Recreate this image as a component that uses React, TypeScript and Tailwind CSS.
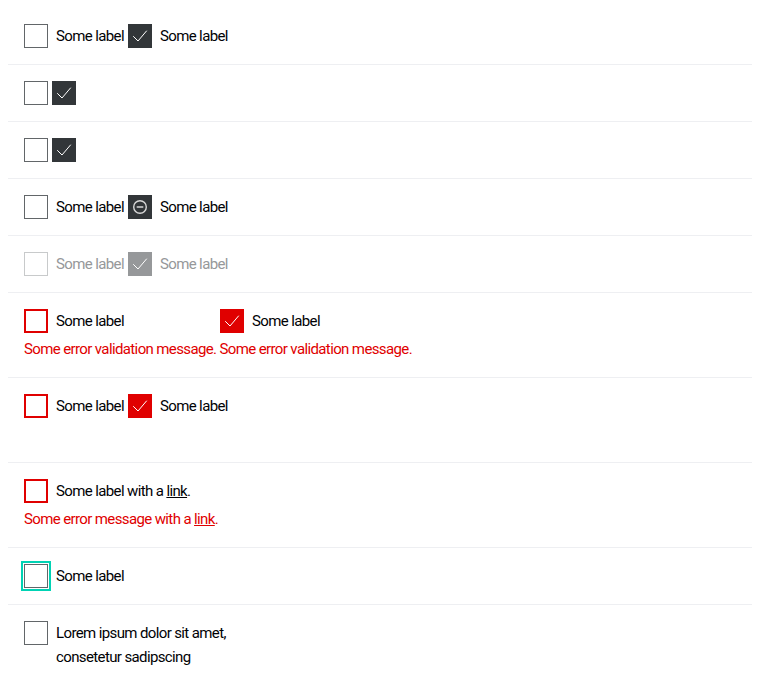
import React from "react";

type State = "default" | "error" | "disabled";

function CheckIcon() {
  return (
    <svg width="24" height="24" viewBox="0 0 24 24" fill="none">
      <path d="M5.5 12.5l4.5 4.5 8.5-10" stroke="#fff" strokeWidth="1" strokeLinecap="round" strokeLinejoin="round" />
    </svg>
  );
}

function IndetIcon() {
  return (
    <svg width="24" height="24" viewBox="0 0 24 24" fill="none">
      <circle cx="12" cy="12" r="6.3" stroke="#d8d8d8" strokeWidth="1.4" />
      <path d="M9.2 12h5.6" stroke="#d8d8d8" strokeWidth="1.4" strokeLinecap="round" />
    </svg>
  );
}

function Box({ checked = false, indeterminate = false, state = "default", focus = false }: { checked?: boolean; indeterminate?: boolean; state?: State; focus?: boolean }) {
  let cls = "";
  if (checked || indeterminate) {
    if (state === "error") cls = "bg-[#e00000]";
    else if (state === "disabled") cls = "bg-[#96989a]";
    else cls = "bg-[#323639]";
  } else {
    if (state === "error") cls = "border-2 border-[#e00000] bg-white";
    else if (state === "disabled") cls = "border border-[#c8cacb] bg-white";
    else cls = "border border-[#626669] bg-white";
  }
  return (
    <span className={`inline-flex w-6 h-6 shrink-0 items-center justify-center align-top ${cls} ${focus ? "outline-2 outline-[#00d3b4] outline-offset-1" : ""}`}>
      {checked && <CheckIcon />}
      {indeterminate && <IndetIcon />}
    </span>
  );
}

function Item({ label, state = "default", checked, indeterminate, focus }: { label?: React.ReactNode; state?: State; checked?: boolean; indeterminate?: boolean; focus?: boolean }) {
  return (
    <span className="inline-flex items-start gap-2 align-top">
      <Box checked={checked} indeterminate={indeterminate} state={state} focus={focus} />
      {label && (
        <span className={`text-[15px] leading-6 tracking-[-0.62px] ${state === "disabled" ? "text-[#96989a]" : "text-[#010205]"}`}>{label}</span>
      )}
    </span>
  );
}

function Row({ children, last = false }: { children: React.ReactNode; last?: boolean }) {
  return <div className={`px-4 py-4 ${last ? "" : "border-b border-[#eeeff2]"}`}>{children}</div>;
}

function ErrMsg({ children }: { children: React.ReactNode }) {
  return <div className="mt-1 text-[15px] leading-6 tracking-[-0.62px] text-[#e00000]">{children}</div>;
}

export default function App() {
  return (
    <div className="p-2 bg-white min-h-[693px]" style={{ fontFamily: "Roboto, 'Liberation Sans', sans-serif" }}>
      <Row>
        <div className="flex gap-1">
          <Item label="Some label" />
          <Item label="Some label" checked />
        </div>
      </Row>
      <Row>
        <div className="flex gap-1">
          <Item />
          <Item checked />
        </div>
      </Row>
      <Row>
        <div className="flex gap-1">
          <Item />
          <Item checked />
        </div>
      </Row>
      <Row>
        <div className="flex gap-1">
          <Item label="Some label" />
          <Item label="Some label" indeterminate />
        </div>
      </Row>
      <Row>
        <div className="flex gap-1">
          <Item label="Some label" state="disabled" />
          <Item label="Some label" state="disabled" checked />
        </div>
      </Row>
      <Row>
        <div className="flex">
          <div className="w-[196px]">
            <Item label="Some label" state="error" />
          </div>
          <Item label="Some label" state="error" checked />
        </div>
        <ErrMsg>Some error validation message. Some error validation message.</ErrMsg>
      </Row>
      <Row>
        <div className="flex gap-1">
          <Item label="Some label" state="error" />
          <Item label="Some label" state="error" checked />
        </div>
        <div className="mt-1 h-6" />
      </Row>
      <Row>
        <Item
          state="error"
          label={
            <>
              Some label with a <span className="underline">link</span>.
            </>
          }
        />
        <ErrMsg>
          Some error message with a <span className="underline">link</span>.
        </ErrMsg>
      </Row>
      <Row>
        <Item label="Some label" focus />
      </Row>
      <Row last>
        <Item
          label={
            <>
              Lorem ipsum dolor sit amet,
              <br />
              consetetur sadipscing
            </>
          }
        />
      </Row>
    </div>
  );
}
